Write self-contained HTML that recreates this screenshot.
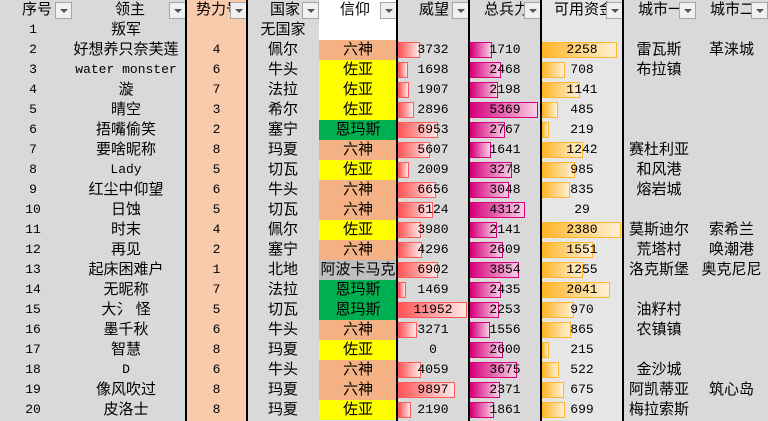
<!DOCTYPE html>
<html><head><meta charset="utf-8"><style>
*{margin:0;padding:0;box-sizing:border-box}
body{width:768px;height:421px;overflow:hidden;background:#d9d9d9;font-family:"Liberation Mono","Noto Sans CJK SC",monospace;position:relative}
.hd{position:absolute;top:0;height:20px;line-height:20px;font-size:15px;font-family:"Liberation Sans","Noto Sans CJK SC",sans-serif;white-space:nowrap;color:#000}
.btn{position:absolute;top:2px;width:17px;height:17px;background:#f0f0f0;border:1px solid #a6a6a6}
.btn:after{content:"";position:absolute;left:4px;top:6px;border-left:4px solid transparent;border-right:4px solid transparent;border-top:4px solid #555}
.vl{position:absolute;top:0;width:2px;height:421px;background:#000}
table{position:absolute;left:0;top:20px;border-collapse:collapse;table-layout:fixed;width:768px}
td{height:20px;padding:0;text-align:center;white-space:nowrap;overflow:visible;position:relative;font-size:15px;line-height:20px;font-family:"Liberation Sans","Noto Sans CJK SC",sans-serif}
td.n{font-family:"Liberation Mono",monospace;font-size:13px}
td.l{font-family:"Liberation Mono","Noto Sans CJK SC",monospace;font-size:13px}
td.l span{font-size:15px;font-family:"Noto Sans CJK SC",sans-serif}
td.p{background:#f8cbad}
td.m{background:#e6e6e6}
.b{position:absolute;left:1px;top:2px;height:16px}
.r{background:linear-gradient(90deg,#ff5555,#ffe8e8);border:1px solid #ff5a5a}
.g{background:linear-gradient(90deg,#d6007b,#f8d0e6);border:1px solid #d6007b}
.o{background:linear-gradient(90deg,#ffb628,#fff0d6);border:1px solid #ffb628}
.t{position:relative}
.LS{background:#f4b183}.ZY{background:#ffff00}.EM{background:#00b050}.AB{background:#bfbfbf}.W{background:#fff}
</style></head><body>
<div style="position:absolute;left:187px;top:0;width:60px;height:421px;background:#f8cbad"></div>
<div style="position:absolute;left:542px;top:0;width:81px;height:421px;background:#e6e6e6"></div>
<div style="position:absolute;left:319px;top:0;width:78px;height:20px;background:#fff"></div>
<div class="hd" style="left:22px">序号</div><div class="btn" style="left:55px"></div>
<div class="hd" style="left:115px">领主</div><div class="btn" style="left:169px"></div>
<div class="hd" style="left:196px">势力号</div><div class="btn" style="left:230px"></div>
<div class="hd" style="left:270px">国家</div><div class="btn" style="left:302px"></div>
<div class="hd" style="left:340px">信仰</div><div class="btn" style="left:380px"></div>
<div class="hd" style="left:419px">威望</div><div class="btn" style="left:452px"></div>
<div class="hd" style="left:484px">总兵力</div><div class="btn" style="left:524px"></div>
<div class="hd" style="left:554px">可用资金</div><div class="btn" style="left:606px"></div>
<div class="hd" style="left:638px">城市一</div><div class="btn" style="left:679px"></div>
<div class="hd" style="left:710px">城市二</div><div class="btn" style="left:751px"></div>
<table>
<colgroup><col style="width:66px"><col style="width:120px"><col style="width:61px"><col style="width:72px"><col style="width:78px"><col style="width:72px"><col style="width:72px"><col style="width:82px"><col style="width:72px"><col style="width:73px"></colgroup>
<tr><td class="n">1</td><td>叛军</td><td class="n p"></td><td>无国家</td><td class="W"></td><td></td><td></td><td class="m"></td><td></td><td></td></tr>
<tr><td class="n">2</td><td>好想养只奈芙莲</td><td class="n p">4</td><td>佩尔</td><td class="LS">六神</td><td class="n"><div class="b r" style="width:22px"></div><span class="t">3732</span></td><td class="n"><div class="b g" style="width:22px"></div><span class="t">1710</span></td><td class="n m"><div class="b o" style="width:75px"></div><span class="t">2258</span></td><td>雷瓦斯</td><td>革涞城</td></tr>
<tr><td class="n">3</td><td class="l">water monster</td><td class="n p">6</td><td>牛头</td><td class="ZY">佐亚</td><td class="n"><div class="b r" style="width:10px"></div><span class="t">1698</span></td><td class="n"><div class="b g" style="width:31px"></div><span class="t">2468</span></td><td class="n m"><div class="b o" style="width:23px"></div><span class="t">708</span></td><td>布拉镇</td><td></td></tr>
<tr><td class="n">4</td><td>漩</td><td class="n p">7</td><td>法拉</td><td class="ZY">佐亚</td><td class="n"><div class="b r" style="width:11px"></div><span class="t">1907</span></td><td class="n"><div class="b g" style="width:28px"></div><span class="t">2198</span></td><td class="n m"><div class="b o" style="width:38px"></div><span class="t">1141</span></td><td></td><td></td></tr>
<tr><td class="n">5</td><td>晴空</td><td class="n p">3</td><td>希尔</td><td class="ZY">佐亚</td><td class="n"><div class="b r" style="width:16px"></div><span class="t">2896</span></td><td class="n"><div class="b g" style="width:68px"></div><span class="t">5369</span></td><td class="n m"><div class="b o" style="width:16px"></div><span class="t">485</span></td><td></td><td></td></tr>
<tr><td class="n">6</td><td>捂嘴偷笑</td><td class="n p">2</td><td>塞宁</td><td class="EM">恩玛斯</td><td class="n"><div class="b r" style="width:40px"></div><span class="t">6953</span></td><td class="n"><div class="b g" style="width:35px"></div><span class="t">2767</span></td><td class="n m"><div class="b o" style="width:7px"></div><span class="t">219</span></td><td></td><td></td></tr>
<tr><td class="n">7</td><td>要啥昵称</td><td class="n p">8</td><td>玛夏</td><td class="LS">六神</td><td class="n"><div class="b r" style="width:32px"></div><span class="t">5607</span></td><td class="n"><div class="b g" style="width:21px"></div><span class="t">1641</span></td><td class="n m"><div class="b o" style="width:41px"></div><span class="t">1242</span></td><td>赛杜利亚</td><td></td></tr>
<tr><td class="n">8</td><td class="l">Lady</td><td class="n p">5</td><td>切瓦</td><td class="ZY">佐亚</td><td class="n"><div class="b r" style="width:11px"></div><span class="t">2009</span></td><td class="n"><div class="b g" style="width:42px"></div><span class="t">3278</span></td><td class="n m"><div class="b o" style="width:33px"></div><span class="t">985</span></td><td>和风港</td><td></td></tr>
<tr><td class="n">9</td><td>红尘中仰望</td><td class="n p">6</td><td>牛头</td><td class="LS">六神</td><td class="n"><div class="b r" style="width:38px"></div><span class="t">6656</span></td><td class="n"><div class="b g" style="width:39px"></div><span class="t">3048</span></td><td class="n m"><div class="b o" style="width:28px"></div><span class="t">835</span></td><td>熔岩城</td><td></td></tr>
<tr><td class="n">10</td><td>日蚀</td><td class="n p">5</td><td>切瓦</td><td class="LS">六神</td><td class="n"><div class="b r" style="width:35px"></div><span class="t">6124</span></td><td class="n"><div class="b g" style="width:55px"></div><span class="t">4312</span></td><td class="n m"><span class="t">29</span></td><td></td><td></td></tr>
<tr><td class="n">11</td><td>时末</td><td class="n p">4</td><td>佩尔</td><td class="ZY">佐亚</td><td class="n"><div class="b r" style="width:23px"></div><span class="t">3980</span></td><td class="n"><div class="b g" style="width:27px"></div><span class="t">2141</span></td><td class="n m"><div class="b o" style="width:79px"></div><span class="t">2380</span></td><td>莫斯迪尔</td><td>索希兰</td></tr>
<tr><td class="n">12</td><td>再见</td><td class="n p">2</td><td>塞宁</td><td class="LS">六神</td><td class="n"><div class="b r" style="width:24px"></div><span class="t">4296</span></td><td class="n"><div class="b g" style="width:33px"></div><span class="t">2609</span></td><td class="n m"><div class="b o" style="width:51px"></div><span class="t">1551</span></td><td>荒塔村</td><td>唤潮港</td></tr>
<tr><td class="n">13</td><td>起床困难户</td><td class="n p">1</td><td>北地</td><td class="AB">阿波卡马克</td><td class="n"><div class="b r" style="width:40px"></div><span class="t">6902</span></td><td class="n"><div class="b g" style="width:49px"></div><span class="t">3854</span></td><td class="n m"><div class="b o" style="width:41px"></div><span class="t">1255</span></td><td>洛克斯堡</td><td>奥克尼尼</td></tr>
<tr><td class="n">14</td><td>无昵称</td><td class="n p">7</td><td>法拉</td><td class="EM">恩玛斯</td><td class="n"><div class="b r" style="width:8px"></div><span class="t">1469</span></td><td class="n"><div class="b g" style="width:31px"></div><span class="t">2435</span></td><td class="n m"><div class="b o" style="width:68px"></div><span class="t">2041</span></td><td></td><td></td></tr>
<tr><td class="n">15</td><td>大氵 怪</td><td class="n p">5</td><td>切瓦</td><td class="EM">恩玛斯</td><td class="n"><div class="b r" style="width:69px"></div><span class="t">11952</span></td><td class="n"><div class="b g" style="width:29px"></div><span class="t">2253</span></td><td class="n m"><div class="b o" style="width:32px"></div><span class="t">970</span></td><td>油籽村</td><td></td></tr>
<tr><td class="n">16</td><td>墨千秋</td><td class="n p">6</td><td>牛头</td><td class="LS">六神</td><td class="n"><div class="b r" style="width:19px"></div><span class="t">3271</span></td><td class="n"><div class="b g" style="width:20px"></div><span class="t">1556</span></td><td class="n m"><div class="b o" style="width:29px"></div><span class="t">865</span></td><td>农镇镇</td><td></td></tr>
<tr><td class="n">17</td><td>智慧</td><td class="n p">8</td><td>玛夏</td><td class="ZY">佐亚</td><td class="n"><span class="t">0</span></td><td class="n"><div class="b g" style="width:33px"></div><span class="t">2600</span></td><td class="n m"><div class="b o" style="width:7px"></div><span class="t">215</span></td><td></td><td></td></tr>
<tr><td class="n">18</td><td class="l">D</td><td class="n p">6</td><td>牛头</td><td class="LS">六神</td><td class="n"><div class="b r" style="width:23px"></div><span class="t">4059</span></td><td class="n"><div class="b g" style="width:47px"></div><span class="t">3675</span></td><td class="n m"><div class="b o" style="width:17px"></div><span class="t">522</span></td><td>金沙城</td><td></td></tr>
<tr><td class="n">19</td><td>像风吹过</td><td class="n p">8</td><td>玛夏</td><td class="LS">六神</td><td class="n"><div class="b r" style="width:57px"></div><span class="t">9897</span></td><td class="n"><div class="b g" style="width:30px"></div><span class="t">2371</span></td><td class="n m"><div class="b o" style="width:22px"></div><span class="t">675</span></td><td>阿凯蒂亚</td><td>筑心岛</td></tr>
<tr><td class="n">20</td><td>皮洛士</td><td class="n p">8</td><td>玛夏</td><td class="ZY">佐亚</td><td class="n"><div class="b r" style="width:13px"></div><span class="t">2190</span></td><td class="n"><div class="b g" style="width:24px"></div><span class="t">1861</span></td><td class="n m"><div class="b o" style="width:23px"></div><span class="t">699</span></td><td>梅拉索斯</td><td></td></tr>
</table>
<div class="vl" style="left:185px"></div>
<div class="vl" style="left:246px"></div>
<div class="vl" style="left:396px"></div>
<div class="vl" style="left:468px"></div>
<div class="vl" style="left:540px"></div>
<div class="vl" style="left:622px"></div>
</body></html>
